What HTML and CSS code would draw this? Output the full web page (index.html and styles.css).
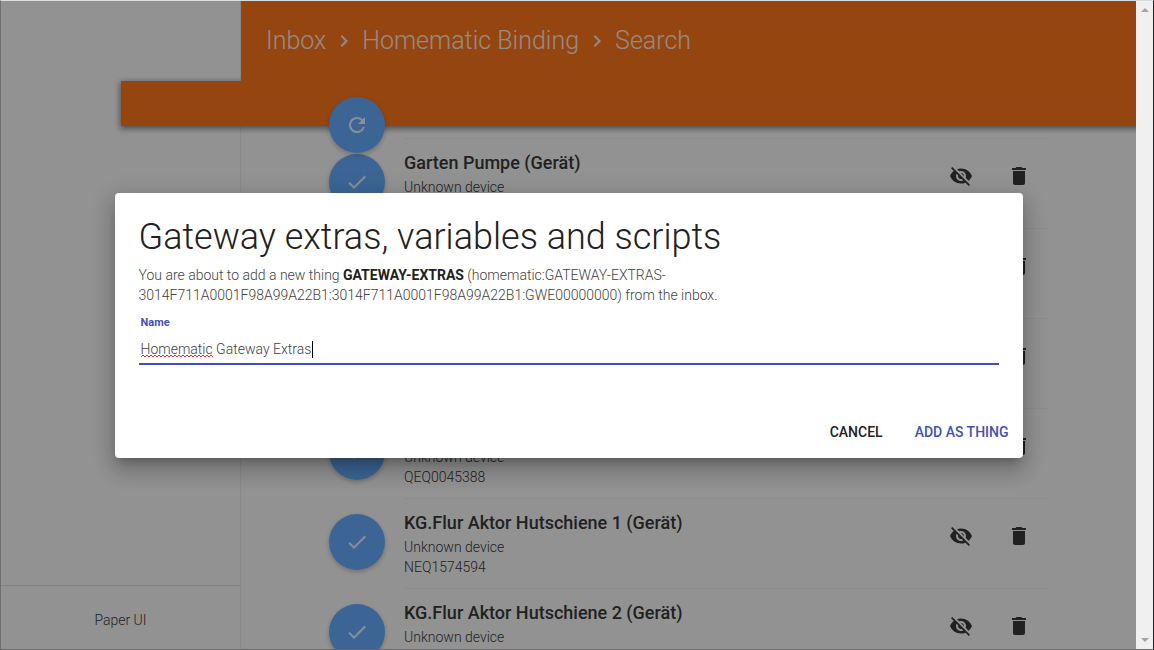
FILE: index.html
```html
<!DOCTYPE html>
<html lang="en">
<head>
    <meta charset="UTF-8">
    <meta name="viewport" content="width=device-width, initial-scale=1.0">
    <title>Paper UI</title>
    <link rel="stylesheet" href="styles.css">
</head>
<body>
    <!-- Shared icons -->
    <svg class="icon-defs" aria-hidden="true">
        <symbol id="icon-chevron" viewBox="0 0 24 24"><path d="M10 6L8.59 7.41 13.17 12l-4.58 4.59L10 18l6-6z"/></symbol>
        <symbol id="icon-refresh" viewBox="0 0 24 24"><path d="M17.65 6.35A7.96 7.96 0 0 0 12 4a8 8 0 1 0 7.73 10h-2.08A5.99 5.99 0 0 1 12 18a6 6 0 1 1 0-12c1.66 0 3.14.69 4.22 1.78L13 11h7V4z"/></symbol>
        <symbol id="icon-check" viewBox="0 0 24 24"><path d="M9 16.17L4.83 12l-1.42 1.41L9 19 21 7l-1.41-1.41z"/></symbol>
        <symbol id="icon-hide" viewBox="0 0 24 24"><path d="M12 7c2.76 0 5 2.24 5 5 0 .65-.13 1.26-.36 1.83l2.92 2.92c1.51-1.26 2.7-2.89 3.43-4.75-1.73-4.39-6-7.5-11-7.5-1.4 0-2.74.25-3.98.7l2.16 2.16C10.74 7.13 11.35 7 12 7zM2 4.27l2.28 2.28.46.46C3.08 8.3 1.78 10.02 1 12c1.73 4.39 6 7.5 11 7.5 1.55 0 3.03-.3 4.38-.84l.42.42L19.73 22 21 20.73 3.27 3 2 4.27zM7.53 9.8l1.55 1.55c-.05.21-.08.43-.08.65 0 1.66 1.34 3 3 3 .22 0 .44-.03.65-.08l1.55 1.55c-.67.33-1.41.53-2.2.53-2.76 0-5-2.24-5-5 0-.79.2-1.53.53-2.2zm4.31-.78l3.15 3.15.02-.16c0-1.66-1.34-3-3-3l-.17.01z"/></symbol>
        <symbol id="icon-delete" viewBox="0 0 24 24"><path d="M6 19c0 1.1.9 2 2 2h8c1.100 0 2-.9 2-2V7H6v12zM19 4h-3.500l-1-1h-5l-1 1H5v2h14V4z"/></symbol>
    </svg>

    <div class="viewport">
        <!-- Sidebar -->
        <aside class="sidebar">
            <footer class="sidebar-footer">Paper UI</footer>
        </aside>

        <main class="main">
            <header class="toolbar">
                <nav class="breadcrumb">
                    <a href="#inbox">Inbox</a>
                    <svg><use href="#icon-chevron"/></svg>
                    <a href="#binding">Homematic Binding</a>
                    <svg><use href="#icon-chevron"/></svg>
                    <a href="#search">Search</a>
                </nav>
                <button class="fab fab-refresh" aria-label="Refresh"><svg><use href="#icon-refresh"/></svg></button>
            </header>

            <!-- Discovered things -->
            <ul class="things">
                <li class="thing">
                    <button class="fab" aria-label="Add"><svg><use href="#icon-check"/></svg></button>
                    <div class="thing-body">
                        <div class="thing-text">
                            <h3>Garten Pumpe (Gerät)</h3>
                            <p>Unknown device</p>
                        </div>
                        <button class="icon-btn" aria-label="Hide"><svg><use href="#icon-hide"/></svg></button>
                        <button class="icon-btn" aria-label="Delete"><svg><use href="#icon-delete"/></svg></button>
                    </div>
                </li>
                <li class="thing">
                    <button class="fab" aria-label="Add"><svg><use href="#icon-check"/></svg></button>
                    <div class="thing-body">
                        <div class="thing-text"></div>
                        <button class="icon-btn" aria-label="Hide"><svg><use href="#icon-hide"/></svg></button>
                        <button class="icon-btn" aria-label="Delete"><svg><use href="#icon-delete"/></svg></button>
                    </div>
                </li>
                <li class="thing">
                    <button class="fab" aria-label="Add"><svg><use href="#icon-check"/></svg></button>
                    <div class="thing-body">
                        <div class="thing-text"></div>
                        <button class="icon-btn" aria-label="Hide"><svg><use href="#icon-hide"/></svg></button>
                        <button class="icon-btn" aria-label="Delete"><svg><use href="#icon-delete"/></svg></button>
                    </div>
                </li>
                <li class="thing">
                    <button class="fab" aria-label="Add"><svg><use href="#icon-check"/></svg></button>
                    <div class="thing-body">
                        <div class="thing-text">
                            <h3>&nbsp;</h3>
                            <p>Unknown device</p>
                            <p>QEQ0045388</p>
                        </div>
                        <button class="icon-btn" aria-label="Hide"><svg><use href="#icon-hide"/></svg></button>
                        <button class="icon-btn" aria-label="Delete"><svg><use href="#icon-delete"/></svg></button>
                    </div>
                </li>
                <li class="thing">
                    <button class="fab" aria-label="Add"><svg><use href="#icon-check"/></svg></button>
                    <div class="thing-body">
                        <div class="thing-text">
                            <h3>KG.Flur Aktor Hutschiene 1 (Gerät)</h3>
                            <p>Unknown device</p>
                            <p>NEQ1574594</p>
                        </div>
                        <button class="icon-btn" aria-label="Hide"><svg><use href="#icon-hide"/></svg></button>
                        <button class="icon-btn" aria-label="Delete"><svg><use href="#icon-delete"/></svg></button>
                    </div>
                </li>
                <li class="thing">
                    <button class="fab" aria-label="Add"><svg><use href="#icon-check"/></svg></button>
                    <div class="thing-body">
                        <div class="thing-text">
                            <h3>KG.Flur Aktor Hutschiene 2 (Gerät)</h3>
                            <p>Unknown device</p>
                        </div>
                        <button class="icon-btn" aria-label="Hide"><svg><use href="#icon-hide"/></svg></button>
                        <button class="icon-btn" aria-label="Delete"><svg><use href="#icon-delete"/></svg></button>
                    </div>
                </li>
            </ul>
        </main>

        <!-- Add thing dialog -->
        <div class="backdrop">
            <form class="dialog" role="dialog" aria-labelledby="dialog-title">
                <div class="dialog-content">
                    <h2 id="dialog-title">Gateway extras, variables and scripts</h2>
                    <p>You are about to add a new thing <strong>GATEWAY-EXTRAS</strong> (homematic:GATEWAY-EXTRAS-<br>3014F711A0001F98A99A22B1:3014F711A0001F98A99A22B1:GWE00000000) from the inbox.</p>
                    <label for="name">Name</label>
                    <div class="field">
                        <input type="text" id="name" value="Homematic Gateway Extras" spellcheck="false">
                        <svg class="squiggle" viewBox="0 0 72 4" aria-hidden="true">
                            <defs><pattern id="wave" width="4" height="4" patternUnits="userSpaceOnUse"><path d="M0 3L2 1L4 3"/></pattern></defs>
                            <rect width="72" height="4" fill="url(#wave)"/>
                        </svg>
                        <span class="caret"></span>
                    </div>
                </div>
                <div class="dialog-actions">
                    <button type="button" class="btn">CANCEL</button>
                    <button type="button" class="btn btn-primary">ADD AS THING</button>
                </div>
            </form>
        </div>
    </div>

    <!-- Scrollbar -->
    <div class="scrollbar" aria-hidden="true">
        <span class="arrow arrow-up"></span>
        <span class="arrow arrow-down"></span>
    </div>
</body>
</html>
```
FILE: styles.css
```css
/* Reset */
* {
    margin: 0;
    padding: 0;
    box-sizing: border-box;
}

body {
    display: flex;
    height: 100vh;
    overflow: hidden;
    border: 1px solid #1c1c1e;
    border-top-color: #d9dddb;
    border-left-color: #6f6f6f;
    border-bottom-color: #6c6a6c;
    font-family: Roboto, sans-serif;
    font-size: 14px;
    font-weight: 300;
    line-height: 20px;
    color: #212121;
}

button {
    border: none;
    background: none;
    font-family: inherit;
    cursor: pointer;
}

.icon-defs {
    position: absolute;
    width: 0;
    height: 0;
}

/* Page */
.viewport {
    position: relative;
    flex: 1;
    display: flex;
    overflow: hidden;
    background: #fafafa;
}

.sidebar {
    flex: 0 0 240px;
    display: flex;
    flex-direction: column;
    justify-content: flex-end;
    border-right: 1px solid #e8e8e8;
}

.sidebar-footer {
    padding: 24px 0 19px;
    border-top: 1px solid #dcdcdc;
    text-align: center;
}

.main {
    flex: 1;
}

/* Toolbar */
.toolbar {
    position: relative;
    z-index: 1;
    height: 125px;
    padding: 24px 25px;
    background: #ff6600;
}

/* Lower strip reaches under the sidebar; its shadow is cut where it meets the toolbar */
.toolbar::before {
    content: '';
    position: absolute;
    z-index: -1;
    left: -120px;
    right: -10px;
    bottom: 0;
    height: 45px;
    background: #ff6600;
    box-shadow: 0 2px 6px 1px rgba(0, 0, 0, 0.5);
    clip-path: polygon(-12px -12px, 120px -12px, 120px 0, 100% 0, 100% 60px, -12px 60px);
}

.breadcrumb {
    display: flex;
    align-items: center;
    gap: 6px;
    font-size: 25px;
    line-height: 32px;
}

.breadcrumb a {
    color: #fff;
    opacity: 0.87;
    text-decoration: none;
}

.breadcrumb svg {
    width: 24px;
    height: 24px;
    fill: #fff;
    opacity: 0.87;
}

/* Round buttons */
.fab {
    flex: none;
    display: flex;
    align-items: center;
    justify-content: center;
    width: 56px;
    height: 56px;
    border-radius: 50%;
    background: #55a4ff;
    box-shadow: 0 2px 5px rgba(0, 0, 0, 0.26);
}

.fab svg {
    width: 24px;
    height: 24px;
    fill: #fff;
    opacity: 0.87;
}

.fab-refresh {
    position: absolute;
    left: 88px;
    bottom: -27px;
}

/* Things */
.things {
    margin: 12px 88px 0;
    list-style: none;
}

.thing {
    display: flex;
    align-items: flex-start;
    gap: 19px;
    height: 90px;
}

.thing > .fab {
    margin-top: 16px;
}

.thing-body {
    flex: 1;
    display: flex;
    align-items: flex-start;
    height: 90px;
    border-top: 1px solid #ededed;
}

.thing-text {
    flex: 1;
    padding-top: 12px;
}

.thing-text h3 {
    margin-bottom: 2px;
    font-size: 18px;
    font-weight: 500;
    line-height: 24px;
}

.icon-btn {
    width: 40px;
    height: 40px;
    margin: 17px 9px 0;
    padding: 8px;
}

.icon-btn svg {
    display: block;
    width: 24px;
    height: 24px;
    fill: #212121;
}

/* Dialog */
.backdrop {
    position: absolute;
    inset: 0;
    z-index: 2;
    display: flex;
    align-items: center;
    justify-content: center;
    background: rgba(33, 33, 33, 0.48);
}

.dialog {
    width: 80%;
    border-radius: 4px;
    background: #fff;
    box-shadow: 0 7px 8px -4px rgba(0, 0, 0, 0.2), 0 13px 19px 2px rgba(0, 0, 0, 0.14), 0 5px 24px 4px rgba(0, 0, 0, 0.12);
}

.dialog-content {
    padding: 24px 24px 41px;
}

.dialog h2 {
    margin-bottom: 8px;
    font-size: 36px;
    font-weight: 300;
    line-height: 40px;
}

.dialog p,
.field input {
    color: #424242;
}

.dialog strong {
    font-weight: 700;
    color: #212121;
}

.dialog label {
    display: block;
    padding: 8px 2px 0;
    font-size: 11px;
    font-weight: 700;
    color: #3f51b5;
}

.field {
    position: relative;
    padding-top: 2px;
}

.field input {
    display: block;
    width: 100%;
    height: 30px;
    padding: 0 2px;
    border: none;
    border-bottom: 2px solid #3f51b5;
    outline: none;
    background: none;
    font: inherit;
}

.squiggle {
    position: absolute;
    left: 2px;
    top: 21px;
    width: 72px;
    height: 4px;
}

.squiggle path {
    fill: none;
    stroke: #e03030;
}

.caret {
    position: absolute;
    left: 173px;
    top: 8px;
    width: 1px;
    height: 17px;
    background: #000;
}

.dialog-actions {
    display: flex;
    justify-content: flex-end;
    gap: 16px;
    padding: 8px 6px;
}

.btn {
    padding: 0 8px;
    font-size: 14px;
    font-weight: 500;
    line-height: 36px;
    color: #212121;
}

.btn-primary {
    color: #3f51b5;
}

/* Scrollbar */
.scrollbar {
    flex: 0 0 17px;
    display: flex;
    flex-direction: column;
    justify-content: space-between;
    align-items: center;
    padding: 7px 0;
    background: #f0f0f0;
}

.arrow {
    border: 4px solid transparent;
}

.arrow-up {
    border-top: none;
    border-bottom-color: #a3a3a3;
}

.arrow-down {
    border-bottom: none;
    border-top-color: #a3a3a3;
}
```
